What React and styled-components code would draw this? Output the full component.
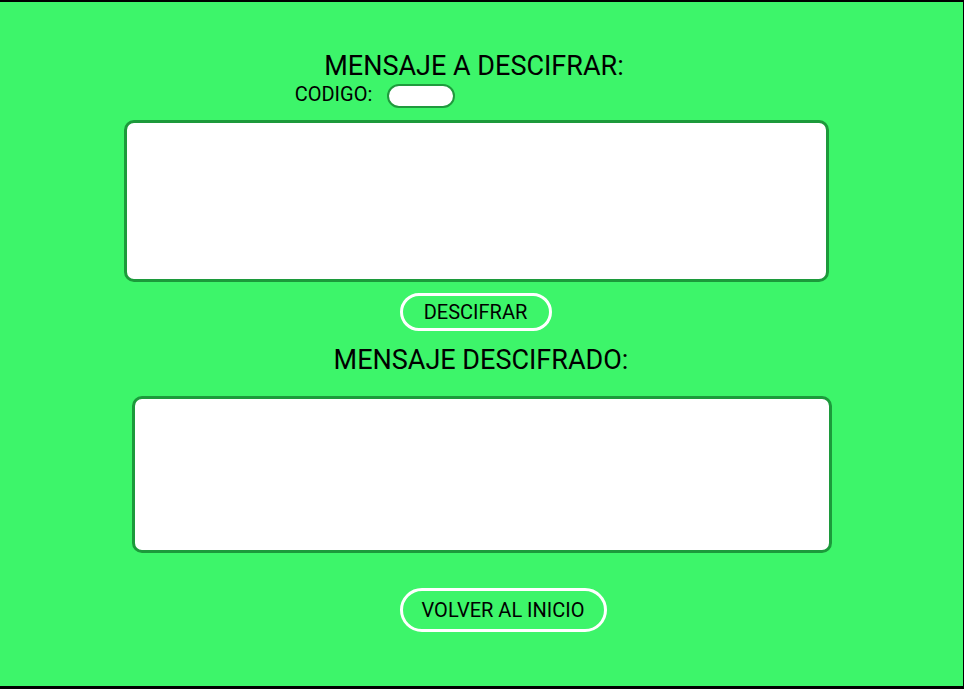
import React from 'react';
import styled, { createGlobalStyle } from 'styled-components';

const GlobalStyle = createGlobalStyle`
  html, body {
    margin: 0;
    padding: 0;
    background: #000;
    font-family: Roboto, "Liberation Sans", sans-serif;
  }
`;

const Screen = styled.main`
  width: 963px;
  height: 684px;
  margin-top: 2px;
  background: #3df56a;
  display: flex;
  flex-direction: column;
  align-items: center;
  box-sizing: border-box;
  padding-top: 48px;
`;

// moves a centred item sideways without taking it out of the flow
const shift = (s = 0) => (s >= 0 ? `margin-left: ${s * 2}px;` : `margin-right: ${-s * 2}px;`);

const Title = styled.h2`
  margin: 0;
  margin-top: ${(p) => p.$top || 0}px;
  font-size: 27px;
  font-weight: 400;
  line-height: 32px;
  color: #000;
  ${(p) => shift(p.$shift)}
`;

const CodeRow = styled.div`
  display: flex;
  align-items: flex-start;
  gap: 15px;
  height: 24px;
  margin-top: 2px;
  ${(p) => shift(p.$shift)}
`;

const Label = styled.label`
  font-size: 20px;
  line-height: 20px;
  color: #000;
`;

const CodeInput = styled.input`
  width: 68px;
  height: 24px;
  box-sizing: border-box;
  border: 2px solid #1f9a3d;
  border-radius: 12px;
  background: #fff;
  outline: none;
`;

const MessageBox = styled.textarea`
  display: block;
  box-sizing: border-box;
  width: ${(p) => p.$w}px;
  height: ${(p) => p.$h}px;
  margin-top: ${(p) => p.$top}px;
  border: 3px solid #1c9a3b;
  border-radius: 10px;
  background: #fff;
  resize: none;
  outline: none;
  ${(p) => shift(p.$shift)}
`;

const PillButton = styled.button`
  box-sizing: border-box;
  width: ${(p) => p.$w}px;
  height: ${(p) => p.$h}px;
  margin-top: ${(p) => p.$top}px;
  padding: 0;
  border: 3px solid #fff;
  border-radius: 22px;
  background: transparent;
  color: #000;
  font-family: Roboto, "Liberation Sans", sans-serif;
  font-size: 20px;
  cursor: pointer;
  ${(p) => shift(p.$shift)}
`;

export default function App() {
  return (
    <>
      <GlobalStyle />
      <Screen>
        <Title $shift={-7.5}>MENSAJE A DESCIFRAR:</Title>
        <CodeRow $shift={-106.5}>
          <Label>CODIGO:</Label>
          <CodeInput type="text" />
        </CodeRow>
        <MessageBox $w={705} $h={162} $top={12} $shift={-5.5} />
        <PillButton $w={152} $h={38} $top={11} $shift={-6}>DESCIFRAR</PillButton>
        <Title $top={13} $shift={-0.5}>MENSAJE DESCIFRADO:</Title>
        <MessageBox $w={700} $h={157} $top={20} $shift={0} />
        <PillButton $w={207} $h={44} $top={35} $shift={21.5}>VOLVER AL INICIO</PillButton>
      </Screen>
    </>
  );
}
